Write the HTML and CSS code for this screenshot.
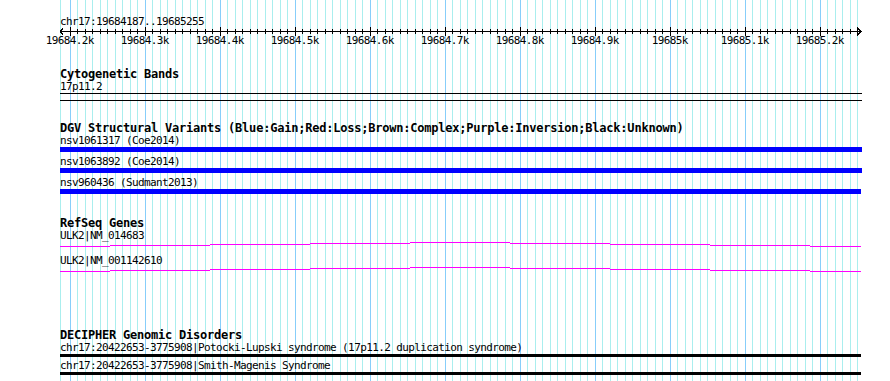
FILE: index.html
```html
<!DOCTYPE html>
<html>
<head>
<meta charset="utf-8">
<title>chr17:19684187..19685255</title>
<link rel="stylesheet" href="styles.css">
</head>
<body>
<div id="panel" class="panel">
	<svg class="grid" id="grid" width="802" height="381"></svg>

	<div class="ruler">
		<div class="ruler-label">chr17:19684187..19685255</div>
		<svg class="ruler-axis" id="axis" width="802" height="10">
			<path class="axis-line" d="M0,5.5H801 M3,2.5L0,5.5L3,8.5 M797,1.5L801,5.5L797,9.5" />
		</svg>
		<div class="ruler-ticks" id="ticks"></div>
	</div>

	<div class="track track-cyto">
		<div class="track-title">Cytogenetic Bands</div>
		<div class="feature">
			<div class="feature-label">17p11.2</div>
			<div class="band"></div>
		</div>
	</div>

	<div class="track track-dgv">
		<div class="track-title">DGV Structural Variants (Blue:Gain;Red:Loss;Brown:Complex;Purple:Inversion;Black:Unknown)</div>
		<div class="feature">
			<div class="feature-label">nsv1061317 (Coe2014)</div>
			<div class="bar bar-gain"></div>
		</div>
		<div class="feature">
			<div class="feature-label">nsv1063892 (Coe2014)</div>
			<div class="bar bar-gain"></div>
		</div>
		<div class="feature">
			<div class="feature-label">nsv960436 (Sudmant2013)</div>
			<div class="bar bar-gain bar-short"></div>
		</div>
	</div>

	<div class="track track-refseq">
		<div class="track-title">RefSeq Genes</div>
		<div class="feature">
			<div class="feature-label">ULK2|NM_014683</div>
			<svg class="gene" width="802" height="12">
				<path d="M0,4.5H50 M50,3.5H150 M150,2.5H250 M250,1.5H350 M350,0.5H450 M450,1.5H550 M550,2.5H650 M650,3.5H750 M750,4.5H801" />
			</svg>
		</div>
		<div class="feature">
			<div class="feature-label">ULK2|NM_001142610</div>
			<svg class="gene" width="802" height="12">
				<path d="M0,4.5H50 M50,3.5H150 M150,2.5H250 M250,1.5H350 M350,0.5H450 M450,1.5H550 M550,2.5H650 M650,3.5H750 M750,4.5H801" />
			</svg>
		</div>
	</div>

	<div class="track track-decipher">
		<div class="track-title">DECIPHER Genomic Disorders</div>
		<div class="feature">
			<div class="feature-label">chr17:20422653-3775908|Potocki-Lupski syndrome (17p11.2 duplication syndrome)</div>
			<div class="bar bar-disorder"></div>
		</div>
		<div class="feature">
			<div class="feature-label">chr17:20422653-3775908|Smith-Magenis Syndrome</div>
			<div class="bar bar-disorder"></div>
		</div>
	</div>
</div>
<script src="script.js"></script>
</body>
</html>
```

FILE: styles.css
```css
html,body {
	margin:0;
	padding:0;
	background:#fff;
}
body {
	font-family: "DejaVu Sans Mono", "Liberation Mono", monospace;
	color:#000;
}
.panel {
	position:relative;
	margin-left:60px;
	width:802px;
	height:381px;
}
.grid {
	position:absolute;
	top:0;
	left:0;
	z-index:0;
}
.grid line {
	stroke:#aaeeee;
	stroke-width:1;
	shape-rendering:crispEdges;
}
.grid line.major {
	stroke:#87cefa;
}
.ruler,
.track {
	position:relative;
	z-index:1;
}

/* ruler */
.ruler {
	padding-top:15px;
}
.ruler-label,
.feature-label,
.tick-label {
	font-size:11px;
	letter-spacing:-0.62px;
	line-height:13px;
	white-space:nowrap;
}
.ruler-label {
	line-height:14px;
}
.ruler-axis {
	display:block;
	margin-top:-3px;
}
.ruler-axis path,
.ruler-axis line {
	stroke:#000;
	stroke-width:1;
	fill:none;
	shape-rendering:crispEdges;
}
.ruler-ticks {
	position:relative;
	height:13px;
	margin-top:-2px;
}
.tick-label {
	position:absolute;
	top:0;
	transform:translateX(-50%);
}

/* tracks */
.track-title {
	font-size:12px;
	font-weight:bold;
	letter-spacing:-0.22px;
	line-height:12px;
	white-space:nowrap;
}
.track-cyto {
	margin-top:21px;
}
.track-dgv {
	margin-top:21px;
}
.track-refseq {
	margin-top:23px;
}
.track-decipher {
	margin-top:51px;
}
.track-decipher .track-title {
	line-height:11px;
}
.band {
	width:802px;
	height:6px;
	border-top:1px solid #000;
	border-bottom:1px solid #000;
}
.bar {
	width:802px;
}
.bar-gain {
	height:5px;
	background:#0000ff;
}
.bar-short {
	width:801px;
}
.track-dgv .feature + .feature {
	margin-top:3px;
}
.gene {
	display:block;
}
.gene path {
	stroke:#ff00ff;
	stroke-width:1;
	fill:none;
	shape-rendering:crispEdges;
}
.track-decipher .feature + .feature {
	margin-top:2px;
}
.bar-disorder {
	width:801px;
	height:3px;
	background:#000;
}
```

FILE: script.js
```js
;(function() {
	var SVGNS = 'http://www.w3.org/2000/svg';
	var grid = document.getElementById('grid');
	var axis = document.getElementById('axis');
	var ticks = document.getElementById('ticks');

	/**
	 * 0.75 px par base, premier tick à 19684200 (x = 9.75)
	 */
	var first = 9.75, step = 7.5, count = 106;

	function line(parent, x1, y1, x2, y2, cls) {
		var l = document.createElementNS(SVGNS, 'line');
		l.setAttribute('x1', x1);
		l.setAttribute('y1', y1);
		l.setAttribute('x2', x2);
		l.setAttribute('y2', y2);
		if (cls) l.setAttribute('class', cls);
		parent.appendChild(l);
	}

	/* bord gauche */
	line(grid, 0.5, 0, 0.5, 381);

	for (var n = 0; n < count; n++) {
		var x = Math.round(first + step * n) + 0.5;
		var major = (n % 10 === 0);
		line(grid, x, 0, x, 381, major ? 'major' : '');
		if (major) {
			line(axis, x, 1, x, 10);
		} else {
			line(axis, x, 3, x, 8);
		}
		if (major) {
			var label = document.createElement('div');
			label.className = 'tick-label';
			label.style.left = (first + step * n) + 'px';
			label.textContent = ((196842 + n / 10) / 10) + 'k';
			ticks.appendChild(label);
		}
	}
})();
```
